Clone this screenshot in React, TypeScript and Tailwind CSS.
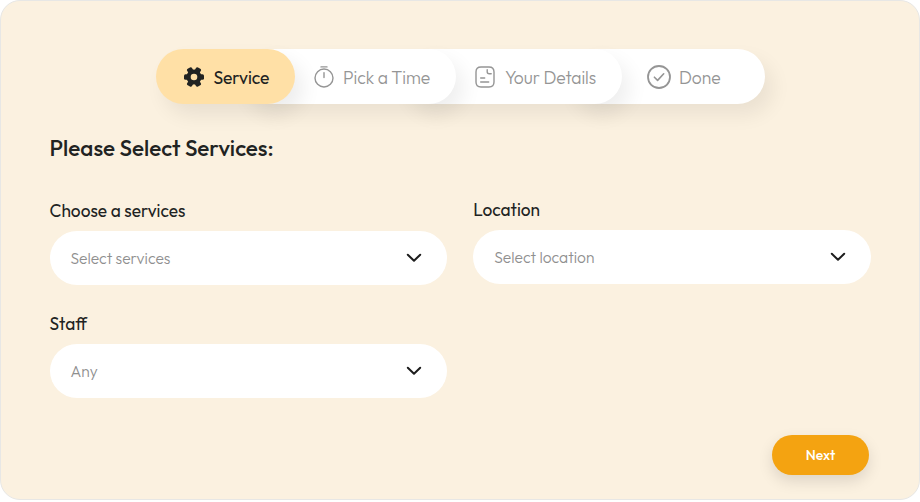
import React from "react";

type TextProps = { children: React.ReactNode; className: string };

const Label = ({ children, className }: TextProps) => (
  <span className={`block whitespace-nowrap text-[#212322] ${className}`}>{children}</span>
);

const Gear = () => (
  <svg width="20" height="20" viewBox="0 0 20 20" className="shrink-0">
    <g fill="#212322">
      <circle cx="10" cy="10" r="7.6" />
      <rect x="7.2" y="-0.3" width="5.6" height="20.6" rx="1.5" transform="rotate(30 10 10)" />
      <rect x="7.2" y="-0.3" width="5.6" height="20.6" rx="1.5" transform="rotate(-30 10 10)" />
      <rect x="0" y="7.2" width="20" height="5.6" rx="1.5" />
    </g>
    <circle cx="10" cy="10" r="3.3" fill="#FFE0A6" />
  </svg>
);

const Stopwatch = () => (
  <svg width="20" height="22" viewBox="0 0 20 22" fill="none" stroke="#959595" strokeWidth="1.4" strokeLinecap="round" className="shrink-0">
    <circle cx="10" cy="12" r="9" />
    <path d="M7 0.9h6M10 6.6v5" />
  </svg>
);

const Note = () => (
  <svg width="20" height="22" viewBox="0 0 20 22" fill="none" stroke="#959595" strokeWidth="1.4" strokeLinecap="round" strokeLinejoin="round" className="shrink-0">
    <path d="M6 1h8q5 0 5 5v10q0 5-5 5H6q-5 0-5-5V6q0-5 5-5Z" />
    <path d="M12.2 3.7v2q0 2 2 2h2M5.7 12h4M5.7 16h8" />
  </svg>
);

const Check = () => (
  <svg width="24" height="24" viewBox="0 0 24 24" fill="none" stroke="#959595" strokeWidth="1.8" strokeLinecap="round" strokeLinejoin="round" className="shrink-0">
    <circle cx="12" cy="12" r="11" />
    <path d="m7.4 12.2 3.2 3.2 6.1-6.6" strokeWidth="1.6" />
  </svg>
);

const Chevron = () => (
  <svg width="16" height="10" viewBox="0 0 16 10" fill="none" stroke="#1d1d1d" strokeWidth="2" strokeLinecap="round" strokeLinejoin="round" className="shrink-0">
    <path d="m1.8 1.8 6.2 6 6.2-6" />
  </svg>
);

const Field = ({ children }: { children: React.ReactNode }) => (
  <div className="flex h-[53.5px] w-[397.5px] items-center justify-between rounded-full bg-white pr-[25px] pl-[21px]">
    {children}
    <Chevron />
  </div>
);

const tab = "relative flex h-[55px] items-center rounded-full";
const tabText = "mt-[2px] whitespace-nowrap text-[17.5px] leading-none tracking-[-0.08px]";
const placeholder = "mt-[2.4px] text-[15.6px] font-light text-[#8f8f8f]";
const label = "mb-[8px] text-[17.3px] leading-6 font-normal";

export default function App() {
  return (
    <div className="h-[502px] w-[920px] bg-white font-['Outfit',Lato,sans-serif]">
      <main className="flex h-[500px] flex-col rounded-[20px] border border-[#e7e7e5] bg-[#FBF1E0] pt-12 pr-[49px] pl-[48.5px]">
        <nav className="ml-[106.5px] flex">
          <div className={`${tab} z-40 w-[139px] bg-[#FFE0A6] pl-[28px] shadow-[8px_11px_20px_rgba(0,0,0,0.075)]`}>
            <Gear />
            <span className={`${tabText} ml-[9.5px] font-normal text-[#212322]`}>Service</span>
          </div>
          <div className={`${tab} z-30 -ml-[55px] w-[216px] bg-white pl-[73.5px] shadow-[8px_11px_20px_rgba(0,0,0,0.065)]`}>
            <Stopwatch />
            <span className={`${tabText} ml-[9.5px] font-light text-[#959595]`}>Pick a Time</span>
          </div>
          <div className={`${tab} z-20 -ml-[55px] w-[221px] bg-white pl-[74px] shadow-[8px_11px_20px_rgba(0,0,0,0.065)]`}>
            <Note />
            <span className={`${tabText} ml-[10px] font-light text-[#959595]`}>Your Details</span>
          </div>
          <div className={`${tab} z-10 -ml-[55px] w-[198px] bg-white pl-[80px] shadow-[8px_11px_20px_rgba(0,0,0,0.065)]`}>
            <Check />
            <span className={`${tabText} ml-[8px] font-light text-[#959595]`}>Done</span>
          </div>
        </nav>
        <h1 className="mt-[30px] text-[22.5px] leading-7 font-medium whitespace-nowrap text-[#212322]">
          <span>Please Select Services:</span>
        </h1>
        <div className="mt-[36px] flex gap-[26.3px]">
          <section className="pt-px">
            <Label className={label}>Choose a services</Label>
            <Field><span className={placeholder}>Select services</span></Field>
          </section>
          <section>
            <Label className={label}>Location</Label>
            <Field><span className={placeholder}>Select location</span></Field>
          </section>
        </div>
        <section className="mt-[27.5px]">
          <Label className={label}>Staff</Label>
          <Field><span className={placeholder}>Any</span></Field>
        </section>
        <button className="mt-[37.5px] mr-px flex h-[39.5px] w-[97px] shrink-0 items-center justify-center self-end rounded-full bg-[#F4A311] pt-px text-[14px] font-medium text-white shadow-[0_6px_15px_rgba(0,0,0,0.12)]">
          Next
        </button>
      </main>
    </div>
  );
}
